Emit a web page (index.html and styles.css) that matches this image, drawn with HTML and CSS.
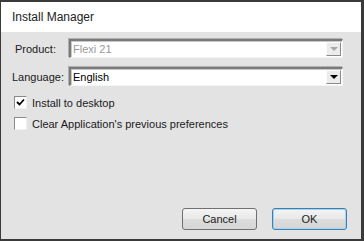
FILE: index.html
```
<!DOCTYPE html>
<html lang="en">
<head>
    <meta charset="UTF-8">
    <title>Install Manager</title>
    <link rel="stylesheet" href="styles.css">
</head>
<body>
    <div class="window">
        <div class="titlebar">Install Manager</div>
        <div class="content">
            <div class="form-row">
                <span class="label label-product">Product:</span>
                <div class="combo disabled">
                    <span class="combo-text">Flexi 21</span>
                    <span class="combo-btn"><span class="arrow"></span></span>
                </div>
            </div>
            <div class="form-row">
                <span class="label">Language:</span>
                <div class="combo">
                    <span class="combo-text">English</span>
                    <span class="combo-btn"><span class="arrow"></span></span>
                </div>
            </div>
            <div class="check-row first">
                <span class="checkbox">
                    <svg width="9" height="9" viewBox="0 0 9 9"><path d="M1 4 L3.5 6.5 L8 1.5" fill="none" stroke="#000" stroke-width="1.8"/></svg>
                </span>
                <span>Install to desktop</span>
            </div>
            <div class="check-row">
                <span class="checkbox"></span>
                <span>Clear Application's previous preferences</span>
            </div>
            <div class="buttons">
                <button class="btn">Cancel</button>
                <button class="btn default">OK</button>
            </div>
        </div>
    </div>
</body>
</html>
```

FILE: styles.css
```
body {
    margin: 0;
    background: #3a3a3a;
    font-family: 'Liberation Sans', Arial, sans-serif;
    font-size: 11px;
    color: #1a1a1a;
}

.window {
    width: 364px;
    height: 241px;
    box-sizing: border-box;
    border-style: solid;
    border-color: #3a3a3a;
    border-width: 2px 3px 2px 1px;
    display: flex;
    flex-direction: column;
}

.titlebar {
    height: 30px;
    background: #ffffff;
    padding-left: 11px;
    display: flex;
    align-items: center;
    font-size: 12px;
    color: #222;
}

.content {
    flex: 1;
    background: #e3e3e3;
    padding: 7px 14px 9px 11px;
    display: flex;
    flex-direction: column;
}

.form-row {
    display: flex;
    align-items: center;
    height: 19px;
    margin-bottom: 9px;
}

.label {
    width: 57px;
}

.label-product {
    padding-left: 3px;
    width: 54px;
}

.combo {
    width: 274px;
    height: 19px;
    box-sizing: border-box;
    background: #fff;
    border-style: solid;
    border-width: 2px 1px 1px 2px;
    border-color: #7a7a7a #f4f4f4 #f4f4f4 #7a7a7a;
    box-shadow: inset 1px 1px 0 #c8c8c8, -1px -1px 0 #b0b0b0;
    display: flex;
    align-items: center;
    justify-content: space-between;
}

.combo-text {
    padding-left: 2px;
    font-size: 11px;
    color: #000;
}

.disabled .combo-text {
    color: #9a9a9a;
}

.combo-btn {
    width: 15px;
    height: 14px;
    margin-right: 1px;
    background: #ececec;
    border: 1px solid;
    border-color: #fafafa #8a8a8a #8a8a8a #fafafa;
    box-sizing: border-box;
    display: flex;
    align-items: center;
    justify-content: center;
}

.arrow {
    width: 0;
    height: 0;
    border-left: 4px solid transparent;
    border-right: 4px solid transparent;
    border-top: 4px solid #000;
}

.disabled .arrow {
    border-top-color: #a8a8a8;
}

.check-row {
    display: flex;
    align-items: center;
    gap: 5px;
    padding-left: 2px;
    height: 13px;
    margin-bottom: 8px;
}

.check-row.first {
    margin-top: 1px;
}

.checkbox {
    width: 13px;
    height: 13px;
    box-sizing: border-box;
    background: #fff;
    border-style: solid;
    border-width: 1px;
    border-color: #8a8a8a #f0f0f0 #f0f0f0 #8a8a8a;
    display: flex;
    align-items: center;
    justify-content: center;
}

.buttons {
    margin-top: auto;
    display: flex;
    justify-content: flex-end;
    gap: 15px;
}

.btn {
    width: 75px;
    height: 22px;
    border: 1px solid #707070;
    border-radius: 3px;
    background: linear-gradient(#f4f4f4, #e8e8e8 50%, #dcdcdc 50%, #d6d6d6);
    font-family: 'Liberation Sans', Arial, sans-serif;
    font-size: 11px;
    color: #1a1a1a;
    padding: 0;
}

.btn.default {
    border-color: #3c7fb1;
    box-shadow: inset 0 0 0 1px #a6d1ef;
}
```
